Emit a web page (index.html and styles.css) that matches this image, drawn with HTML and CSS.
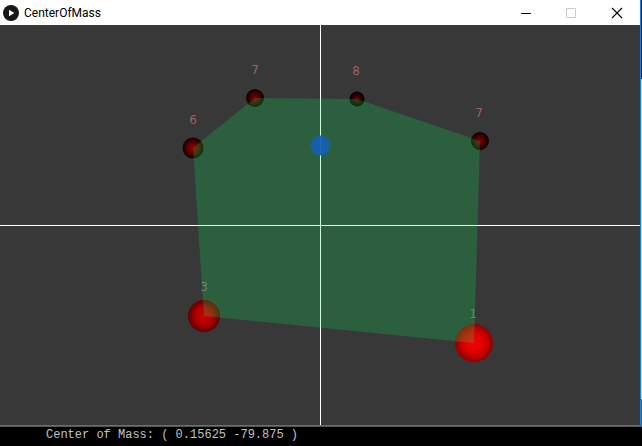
FILE: index.html
```html
<!DOCTYPE html>
<html lang="en">
<head>
<meta charset="utf-8">
<title>CenterOfMass</title>
<link rel="stylesheet" href="styles.css">
</head>
<body>
<main class="window">
  <header class="titlebar">
    <svg class="logo" viewBox="0 0 16 16" aria-hidden="true"><circle cx="8" cy="8" r="8" fill="#171717"/><path d="M6 4.8v6.4L11.4 8z" fill="#fff"/></svg>
    <h1 class="title">CenterOfMass</h1>
    <div class="controls">
      <button class="control" aria-label="Minimize"><svg class="glyph" viewBox="0 0 10 10"><path d="M1 5.5h10" stroke="#000"/></svg></button>
      <button class="control" aria-label="Maximize" disabled><svg class="glyph" viewBox="0 0 10 10"><path d="M.5.5h9v9h-9z" fill="none" stroke="#ccc"/></svg></button>
      <button class="control" aria-label="Close"><svg class="glyph" viewBox="0 0 10 10"><path d="M0 0l10 10M10 0L0 10" stroke="#000" stroke-width="1.1"/></svg></button>
    </div>
  </header>
  <svg class="canvas" viewBox="0 0 640 400" role="img" aria-label="Center of mass plot">
    <defs>
      <radialGradient id="m1"><stop offset="0" stop-color="#f60000"/><stop offset=".5" stop-color="#e00000"/><stop offset="1" stop-color="#900000"/></radialGradient>
      <radialGradient id="m3"><stop offset="0" stop-color="#cc0000"/><stop offset=".5" stop-color="#b40000"/><stop offset="1" stop-color="#600000"/></radialGradient>
      <radialGradient id="m6"><stop offset="0" stop-color="#900000"/><stop offset=".5" stop-color="#600000"/><stop offset="1" stop-color="#100000"/></radialGradient>
      <radialGradient id="m7"><stop offset="0" stop-color="#800000"/><stop offset=".5" stop-color="#4c0000"/><stop offset="1" stop-color="#080000"/></radialGradient>
      <radialGradient id="m8"><stop offset="0" stop-color="#700000"/><stop offset=".5" stop-color="#300000"/><stop offset="1" stop-color="#000"/></radialGradient>
    </defs>
    <path class="axes" d="M320.5 0v400M0 200.5h640"/>
    <circle cx="193" cy="123" r="10.5" fill="url(#m6)"/>
    <circle cx="255" cy="73" r="9" fill="url(#m7)"/>
    <circle cx="357" cy="74" r="7.5" fill="url(#m8)"/>
    <circle cx="480" cy="116" r="9" fill="url(#m7)"/>
    <circle cx="474" cy="318" r="19" fill="url(#m1)"/>
    <circle cx="204" cy="291" r="16" fill="url(#m3)"/>
    <g class="labels">
      <text x="193" y="99">6</text>
      <text x="255" y="49">7</text>
      <text x="356" y="50">8</text>
      <text x="479" y="92">7</text>
      <text class="covered" x="473" y="293">1</text>
      <text class="covered" x="204" y="266">3</text>
    </g>
    <path class="hull" d="M193 123L255 73L357 74L480 116L474 318L204 291Z"/>
    <circle class="center" cx="320.5" cy="120.5" r="10"/>
  </svg>
</main>
<aside class="desktop"></aside>
<footer class="console"><output class="message">Center of Mass: ( 0.15625 -79.875 )</output></footer>
</body>
</html>
```
FILE: styles.css
```css
* { box-sizing: border-box; }
body {
  margin: 0;
  min-height: 100vh;
  display: grid;
  grid-template-columns: 1fr 1px;
  grid-template-rows: auto 1fr;
  background: #000;
}
.window {
  border-right: 1px solid #1883d7;
  border-bottom: 1px solid #1883d7;
  background: #383838;
}
.titlebar {
  display: flex;
  align-items: center;
  height: 25px;
  padding-left: 3px;
  gap: 5px;
  background: #fff;
}
.logo { width: 16px; height: 16px; }
.title {
  margin: 0;
  font: 12px/16px Roboto, "Noto Sans", sans-serif;
  color: #000;
}
.controls { display: flex; margin-left: auto; }
.control {
  display: flex;
  align-items: center;
  justify-content: center;
  width: 46px;
  height: 24px;
  padding: 0;
  border: 0;
  background: none;
}
.glyph { width: 10px; height: 10px; overflow: visible; }
.canvas { display: block; width: 100%; }
.axes { stroke: #fff; stroke-width: 1; fill: none; }
.labels {
  font: 12px "DejaVu Sans", sans-serif;
  fill: #a35f5f;
  text-anchor: middle;
}
.covered { fill: #94646a; }
.hull { fill: #00ff55; fill-opacity: .2; }
.center { fill: #165fb0; fill-opacity: .92; }
.desktop {
  background: linear-gradient(#03182c 79px, #c8dcec 79px, #c8dcec 399px, #555 399px);
}
.console {
  grid-column: 1 / -1;
  padding: 1px 46px;
  border-top: 1px solid #555;
  color: #c0c0c0;
}
.message {
  display: block;
  font: 12px/14px "Liberation Mono", monospace;
}
```
